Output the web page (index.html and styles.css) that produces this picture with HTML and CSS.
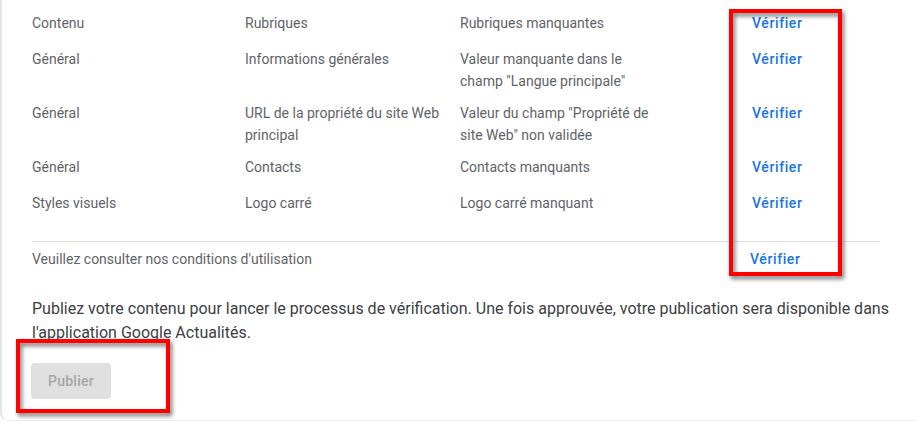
FILE: index.html
```html
<!DOCTYPE html>
<html lang="fr">
<head>
<meta charset="utf-8">
<title>Vérification</title>
<link rel="stylesheet" href="styles.css">
</head>
<body>
<div class="page">
  <div class="card">
    <div class="issues">
      <div class="row">
        <div class="cell">Contenu</div>
        <div class="cell">Rubriques</div>
        <div class="cell narrow">Rubriques manquantes</div>
        <div class="action"><span class="link">Vérifier</span></div>
      </div>
      <div class="row">
        <div class="cell">Général</div>
        <div class="cell">Informations générales</div>
        <div class="cell narrow">Valeur manquante dans le champ "Langue principale"</div>
        <div class="action"><span class="link">Vérifier</span></div>
      </div>
      <div class="row">
        <div class="cell">Général</div>
        <div class="cell">URL de la propriété du site Web principal</div>
        <div class="cell narrow">Valeur du champ "Propriété de site Web" non validée</div>
        <div class="action"><span class="link">Vérifier</span></div>
      </div>
      <div class="row">
        <div class="cell">Général</div>
        <div class="cell">Contacts</div>
        <div class="cell narrow">Contacts manquants</div>
        <div class="action"><span class="link">Vérifier</span></div>
      </div>
      <div class="row">
        <div class="cell">Styles visuels</div>
        <div class="cell">Logo carré</div>
        <div class="cell narrow">Logo carré manquant</div>
        <div class="action"><span class="link">Vérifier</span></div>
      </div>
    </div>
    <div class="separator"></div>
    <div class="terms">
      <div class="terms-text">Veuillez consulter nos conditions d'utilisation</div>
      <div class="action"><span class="link">Vérifier</span></div>
    </div>
    <p class="notice">Publiez votre contenu pour lancer le processus de vérification. Une fois approuvée, votre publication sera disponible dans l'application Google Actualités.</p>
    <button class="publish" disabled>Publier</button>
  </div>
  <div class="mark mark-verify"></div>
  <div class="mark mark-publish"></div>
</div>
</body>
</html>
```

FILE: styles.css
```css
html, body {
  margin: 0;
  padding: 0;
  background: #ffffff;
}

body {
  font-family: Roboto, "Liberation Sans", Arial, sans-serif;
  overflow: hidden;
}

.page {
  position: relative;
  width: 916px;
  height: 425px;
  overflow: hidden;
}

.card {
  box-sizing: border-box;
  width: 940px;
  padding: 5px 40px 21px 30px;
  border-left: 2px solid #e3e3e6;
  border-bottom: 1px solid #f0f0f2;
  border-bottom-left-radius: 8px;
}

.issues {
  display: flex;
  flex-direction: column;
}

.row {
  display: grid;
  grid-template-columns: 213px 215px 292px 1fr;
  align-items: start;
}

.cell {
  padding: 7px 16px 3px 0;
  font-size: 14px;
  line-height: 22px;
  color: #5f6368;
}

.cell.narrow {
  max-width: 200px;
  padding-right: 0;
}

.action {
  height: 36px;
  line-height: 36px;
}

.link {
  font-size: 14px;
  font-weight: 500;
  color: #1a73e8;
  letter-spacing: 0.6px;
}

.separator {
  margin: 20px 20px 0 0;
  height: 1px;
  background: #e0e0e0;
}

.terms {
  display: grid;
  grid-template-columns: 718px 1fr;
  height: 34px;
  align-items: center;
}

.terms .action {
  height: 34px;
  line-height: 34px;
}

.terms-text {
  font-size: 14px;
  line-height: 22px;
  color: #5f6368;
}

.notice {
  margin: 21px 0 0 0;
  font-size: 16px;
  line-height: 24px;
  color: #3c4043;
}

.publish {
  margin-top: 18px;
  margin-left: -1px;
  width: 80px;
  height: 36px;
  border: none;
  border-radius: 4px;
  background: #e0e0e0;
  color: #a6a6a6;
  font-family: inherit;
  font-size: 14px;
  font-weight: 500;
  letter-spacing: 0.25px;
}

.mark {
  position: absolute;
  box-sizing: border-box;
  border: 4px solid #ff0000;
  filter: drop-shadow(2px 3px 2px rgba(0, 0, 0, 0.55));
}

.mark-verify {
  left: 729px;
  top: 9px;
  width: 113px;
  height: 267px;
}

.mark-publish {
  left: 16px;
  top: 339px;
  width: 154px;
  height: 74px;
}
```
